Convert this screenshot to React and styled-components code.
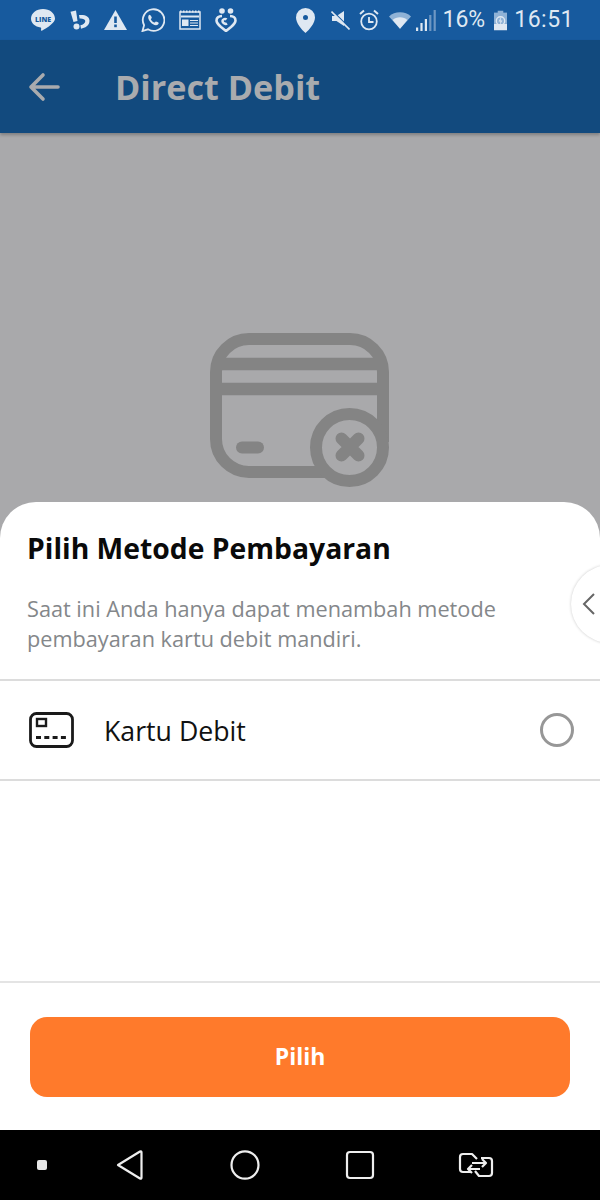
import React from "react";
import styled, { createGlobalStyle } from "styled-components";

const GlobalStyle = createGlobalStyle`
  html, body {
    margin: 0;
    padding: 0;
    background: #000;
  }
  * {
    box-sizing: border-box;
  }
`;

const Screen = styled.div`
  width: 600px;
  height: 1200px;
  display: flex;
  flex-direction: column;
  overflow: hidden;
  font-family: "Open Sans", sans-serif;
`;

const StatusBar = styled.div`
  height: 40px;
  flex: none;
  display: flex;
  align-items: center;
  justify-content: space-between;
  padding: 0 26px 0 30px;
  background: #175a9e;
  color: #dfe8f2;
`;

const StatusGroup = styled.div`
  display: flex;
  align-items: center;
  gap: 14px;
`;

const StatusRight = styled.div`
  display: flex;
  align-items: center;
`;

const StatusSlot = styled.span`
  display: flex;
  margin-left: ${(p) => p.$left || 0}px;
`;

const StatusText = styled.span`
  margin-left: ${(p) => p.$left}px;
  font-family: Roboto, sans-serif;
  font-size: 23px;
  line-height: 40px;
  letter-spacing: ${(p) => p.$spacing || 0}px;
`;

const Header = styled.div`
  height: 93px;
  flex: none;
  display: flex;
  align-items: center;
  gap: 55px;
  padding: 0 0 0 28px;
  background: #124a7e;
  box-shadow: 0 2px 3px rgba(0, 0, 0, 0.25);
  position: relative;
`;

const HeaderTitle = styled.h1`
  margin: 0;
  font-size: 34.2px;
  font-weight: 700;
  color: #a9abae;
`;

const Backdrop = styled.div`
  height: 405px;
  flex: none;
  display: flex;
  justify-content: center;
  padding-top: 200px;
  background: #a9a9ab;
`;

const Sheet = styled.div`
  flex: 1;
  margin-top: -36px;
  position: relative;
  display: flex;
  flex-direction: column;
  overflow: hidden;
  background: #fff;
  border-radius: 36px 36px 0 0;
`;

const SheetIntro = styled.div`
  height: 179px;
  flex: none;
  padding: 27px 27px 0;
  border-bottom: 2px solid #dcdcdc;
`;

const SheetTitle = styled.h2`
  margin: 0 0 27px;
  font-size: 28.3px;
  line-height: 38px;
  font-weight: 700;
  color: #0a0a0a;
`;

const SheetText = styled.p`
  margin: 0;
  font-size: 21.7px;
  line-height: 30px;
  color: #84878a;
`;

const SideTab = styled.div`
  position: absolute;
  top: 63px;
  left: 571px;
  width: 78px;
  height: 78px;
  display: flex;
  align-items: center;
  padding-left: 11px;
  background: #fff;
  border-radius: 50%;
  box-shadow: 0 0 3px rgba(0, 0, 0, 0.22);
`;

const MethodRow = styled.div`
  height: 100px;
  flex: none;
  display: flex;
  align-items: center;
  padding: 0 26px 0 29px;
  border-bottom: 2px solid #dcdcdc;
`;

const MethodLabel = styled.span`
  flex: 1;
  margin-left: 30px;
  font-size: 26.7px;
  color: #111;
`;

const Radio = styled.span`
  width: 34px;
  height: 34px;
  border-radius: 50%;
  border: 3px solid #979797;
`;

const Spacer = styled.div`
  flex: 1;
`;

const Footer = styled.div`
  height: 149px;
  flex: none;
  padding: 34px 30px 0;
  border-top: 2px solid #e4e4e4;
`;

const PrimaryButton = styled.button`
  width: 100%;
  height: 80px;
  padding: 0 0 2px;
  border: none;
  border-radius: 17px;
  background: #ff7a2b;
  color: #fff;
  font-family: inherit;
  font-size: 23px;
  font-weight: 700;
`;

const NavBar = styled.div`
  height: 70px;
  flex: none;
  display: flex;
  align-items: center;
  padding: 0 0 0 37px;
  background: #000;
`;

const NavDot = styled.span`
  width: 10px;
  height: 10px;
  margin-right: 69px;
  border-radius: 2px;
  background: #e6e6e6;
`;

const NavIconSlot = styled.span`
  display: flex;
  margin-right: ${(p) => p.$gap}px;
`;

const Line = () => (
  <svg width="26" height="25" viewBox="0 0 26 25">
    <path fill="#dfe8f2" d="M13 1C6.400 1 1 5.200 1 10.600c0 4.700 4.100 8.300 9.600 9 .8.200.6 1 .4 2.400-.1.800.5 1 1.200.6 2-1.100 8-4.700 10.500-7.600 1.800-1.700 2.300-3.200 2.300-4.400C25 5.200 19.600 1 13 1z" />
    <text x="13" y="13.500" textAnchor="middle" fontFamily="Open Sans, sans-serif" fontWeight="800" fontSize="7" fill="#175a9e">LINE</text>
  </svg>
);

const Bukalapak = () => (
  <svg width="20" height="20" viewBox="0 0 20 20" fill="#dfe8f2">
    <path d="M0.500 1.800 6 0.500 7.500 11 3.500 12z" />
    <circle cx="6.500" cy="16.500" r="3" />
    <path d="M9 5c5.800-.6 10.500 1 10.500 5.800S15 18 11 18.800l-.6-3.500c2.600-.4 4.900-1.900 4.900-4.200 0-2-2.800-2.800-5.700-2.600z" />
  </svg>
);

const Warning = () => (
  <svg width="23" height="20" viewBox="0 0 23 20">
    <path fill="#dfe8f2" d="M11.500 0 23 20H0z" />
    <rect x="10.200" y="6.500" width="2.600" height="6.500" fill="#175a9e" />
    <rect x="10.200" y="14.500" width="2.600" height="2.700" fill="#175a9e" />
  </svg>
);

const Whatsapp = () => (
  <svg width="24" height="24" viewBox="0 0 24 24" fill="none">
    <path stroke="#dfe8f2" strokeWidth="1.800" d="M1.500 23l1.600-5.800A10.800 10.800 0 1 1 7 21.300z" />
    <path fill="#dfe8f2" d="M8.700 6.700c-.5 0-1.500.8-1.500 2.500 0 3 3.800 7.800 7.800 8 1.700 0 2.700-1.200 2.700-2.300 0-.5-2.400-1.600-2.800-1.500-.4.100-.8 1.100-1.300 1.200-.9.100-3.500-2-3.800-3.400 0-.5 1-1 1-1.500S9.500 6.700 8.700 6.700z" />
  </svg>
);

const Newspaper = () => (
  <svg width="22" height="20" viewBox="0 0 22 20" fill="none" stroke="#dfe8f2">
    <rect x="1" y="2" width="20" height="17" strokeWidth="1.500" />
    <path strokeWidth="2" strokeDasharray="1.500 1.500" d="M1 1.500h20" />
    <path strokeWidth="2" d="M2 6.500h18" />
    <rect x="3" y="9.500" width="6.500" height="6.500" fill="#dfe8f2" strokeWidth="0" />
    <path strokeWidth="1.200" d="M11 10.500h8M11 13h8M11 15.500h8" />
  </svg>
);

const People = () => (
  <svg width="22" height="24" viewBox="0 0 22 24" fill="none">
    <circle cx="7" cy="3" r="2.800" fill="#dfe8f2" />
    <circle cx="15.500" cy="3" r="2.800" fill="#dfe8f2" />
    <path stroke="#dfe8f2" strokeWidth="2.600" strokeLinejoin="round" d="M7 8C3.500 8 1.500 10 1.500 12.500c0 2.400 2 4.300 4.500 6.500l5 4 5-4c2.500-2.200 4.500-4.100 4.500-6.500C20.500 10 18.500 8 15 8" />
    <path stroke="#dfe8f2" strokeWidth="2.600" d="M12 15.500c-1.500 1-4.500-.5-4.500-2.500 0-2 3-2.500 4-1.500" />
  </svg>
);

const Pin = () => (
  <svg width="19" height="25" viewBox="0 0 19 25">
    <path fill="#dfe8f2" fillRule="evenodd" d="M9.500 0A9.500 9.500 0 0 0 0 9.500c0 5.500 5.500 12 9.500 15.500 4-3.500 9.500-10 9.500-15.500A9.500 9.500 0 0 0 9.500 0zm0 7a2.500 2.500 0 1 1 0 5 2.500 2.500 0 0 1 0-5z" />
  </svg>
);

const Muted = () => (
  <svg width="19" height="20" viewBox="0 0 19 20">
    <path fill="#dfe8f2" d="M1 6h4.500L13 1v15l-7.500-5H1z" />
    <path stroke="#175a9e" strokeWidth="1.400" d="M0 -.5l17 17" />
    <path stroke="#dfe8f2" strokeWidth="1.600" d="M0.500 1.500l18 18" />
  </svg>
);

const Alarm = () => (
  <svg width="20" height="22" viewBox="0 0 20 22" fill="none" stroke="#dfe8f2" strokeWidth="1.800">
    <circle cx="10" cy="12.500" r="7.800" />
    <path d="M10 8v5h4.500" />
    <path strokeWidth="2" d="M1 5l4-3.500M19 5l-4-3.500" />
  </svg>
);

const Wifi = () => (
  <svg width="22" height="17" viewBox="0 0 24 18">
    <path fill="#8fb2d6" d="M12 0C7 0 3.500 1.500 0 4.500L12 18 24 4.500C20.500 1.500 17 0 12 0z" />
    <path fill="#dfe8f2" d="M12 5.500c-3.500 0-5.800 1-8 3L12 18l8-9.500c-2.200-2-4.500-3-8-3z" />
  </svg>
);

const Signal = () => (
  <svg width="20" height="21" viewBox="0 0 20 21">
    <rect x="0" y="17.500" width="2.200" height="3.500" fill="#dfe8f2" />
    <rect x="4.400" y="13" width="2.200" height="8" fill="#dfe8f2" />
    <rect x="8.800" y="9" width="2.200" height="12" fill="#dfe8f2" />
    <rect x="13.200" y="5" width="2.200" height="16" fill="#6e97c3" />
    <rect x="17.600" y="0" width="2.200" height="21" fill="#6e97c3" />
  </svg>
);

const Battery = () => (
  <svg width="13" height="21" viewBox="0 0 14 21">
    <rect x="4" y="0" width="6" height="3" fill="#8fb2d6" />
    <rect x="0" y="2" width="14" height="12" fill="#8fb2d6" />
    <rect x="0" y="14" width="14" height="7" fill="#dfe8f2" />
    <circle cx="7" cy="11" r="4.500" fill="none" stroke="#dfe8f2" strokeWidth="1.500" />
    <path fill="#dfe8f2" d="M8 6 5 11.500h2L6 16l3-5.500H7z" />
  </svg>
);

const BackArrow = () => (
  <svg width="32" height="30" viewBox="0 0 32 30" fill="none" stroke="#a9abae" strokeWidth="3.600" strokeLinecap="round" strokeLinejoin="round">
    <path d="M30 15H3M15 3 3 15l12 12" />
  </svg>
);

const EmptyCard = () => (
  <svg width="180" height="156" viewBox="0 0 180 156" fill="none" stroke="#848484">
    <path strokeWidth="12" d="M115 139H39A33 33 0 0 1 6 106V39A33 33 0 0 1 39 6h101a33 33 0 0 1 33 33v70" />
    <path strokeWidth="12.500" d="M6 31h167M6 56h167" />
    <path strokeWidth="12" strokeLinecap="round" d="M32 114.500h16" />
    <circle cx="139.500" cy="114.500" r="33.500" strokeWidth="12" fill="#a9a9ab" />
    <path strokeWidth="12" strokeLinecap="round" d="M131.500 105.500l17 17M148.500 105.500l-17 17" />
  </svg>
);

const DebitCard = () => (
  <svg width="45" height="36" viewBox="0 0 45 36" fill="none" stroke="#1a1a1a">
    <rect x="1.500" y="1.500" width="42" height="33" rx="6" strokeWidth="2.800" />
    <rect x="8" y="7" width="9" height="7" strokeWidth="2.400" />
    <path strokeWidth="3" strokeDasharray="5 3.300" d="M7 25.500h31" />
  </svg>
);

const Chevron = () => (
  <svg width="14" height="24" viewBox="0 0 14 24" fill="none" stroke="#666" strokeWidth="2">
    <path d="M12 2 2 12l10 10" />
  </svg>
);

const NavBack = () => (
  <svg width="28" height="30" viewBox="0 0 28 30" fill="none" stroke="#eee" strokeWidth="2.200" strokeLinejoin="round">
    <path d="M2 15 24 1.500q1.500-.5 1.500 1v25q0 1.500-1.500 1z" />
  </svg>
);

const NavHome = () => (
  <svg width="30" height="30" viewBox="0 0 30 30" fill="none" stroke="#eee" strokeWidth="2.200">
    <ellipse cx="15" cy="15" rx="13.500" ry="13.700" />
  </svg>
);

const NavRecent = () => (
  <svg width="30" height="30" viewBox="0 0 30 30" fill="none" stroke="#eee" strokeWidth="2.200">
    <rect x="2" y="2" width="26" height="26" rx="3" />
  </svg>
);

const NavSwitch = () => (
  <svg width="36" height="26" viewBox="0 0 36 26" fill="none" stroke="#eee" strokeWidth="2.200" strokeLinejoin="round">
    <path d="M13 20H5q-3 0-3-3V5q0-3 3-3h9l5 5" />
    <path d="M23 6h8q3 0 3 3v12q0 3-3 3H21l-4-5" />
    <path d="M14 11h14M24 7l4 4-4 4M22 17H10M14 13l-4 4 4 4" />
  </svg>
);

function App() {
  return (
    <>
      <GlobalStyle />
      <Screen>
        <StatusBar>
          <StatusGroup>
            <Line />
            <Bukalapak />
            <Warning />
            <Whatsapp />
            <Newspaper />
            <People />
          </StatusGroup>
          <StatusRight>
            <StatusSlot><Pin /></StatusSlot>
            <StatusSlot $left={16}><Muted /></StatusSlot>
            <StatusSlot $left={9}><Alarm /></StatusSlot>
            <StatusSlot $left={10}><Wifi /></StatusSlot>
            <StatusSlot $left={5}><Signal /></StatusSlot>
            <StatusText $left={7}>16%</StatusText>
            <StatusSlot $left={9}><Battery /></StatusSlot>
            <StatusText $left={7} $spacing={0.5}>16:51</StatusText>
          </StatusRight>
        </StatusBar>

        <Header>
          <BackArrow />
          <HeaderTitle>Direct Debit</HeaderTitle>
        </Header>

        <Backdrop>
          <EmptyCard />
        </Backdrop>

        <Sheet>
          <SheetIntro>
            <SheetTitle>Pilih Metode Pembayaran</SheetTitle>
            <SheetText>
              Saat ini Anda hanya dapat menambah metode
              <br />
              pembayaran kartu debit mandiri.
            </SheetText>
          </SheetIntro>
          <SideTab>
            <Chevron />
          </SideTab>
          <MethodRow>
            <DebitCard />
            <MethodLabel>Kartu Debit</MethodLabel>
            <Radio />
          </MethodRow>
          <Spacer />
          <Footer>
            <PrimaryButton>Pilih</PrimaryButton>
          </Footer>
        </Sheet>

        <NavBar>
          <NavDot />
          <NavIconSlot $gap={86}><NavBack /></NavIconSlot>
          <NavIconSlot $gap={85}><NavHome /></NavIconSlot>
          <NavIconSlot $gap={83}><NavRecent /></NavIconSlot>
          <NavIconSlot $gap={0}><NavSwitch /></NavIconSlot>
        </NavBar>
      </Screen>
    </>
  );
}

export default App;
